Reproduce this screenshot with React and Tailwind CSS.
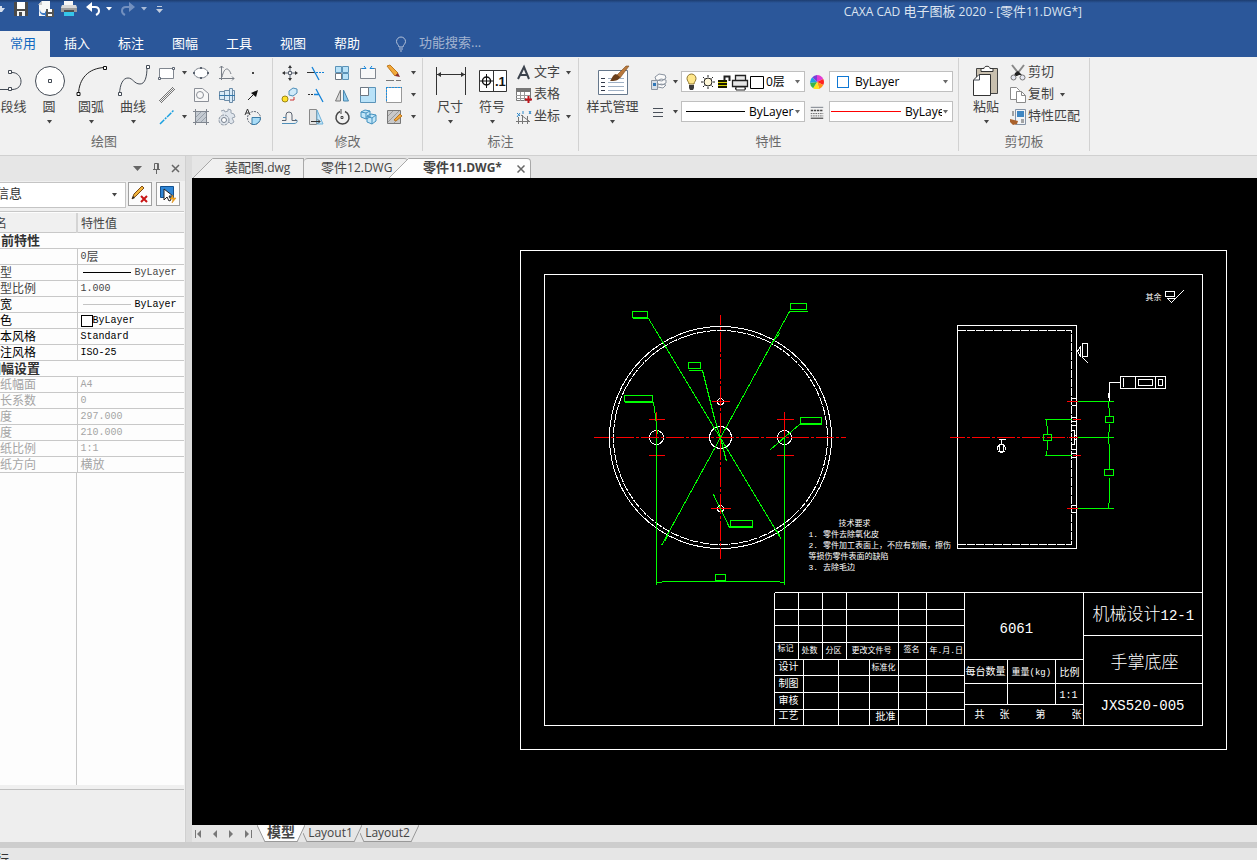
import React, { useState } from "react";

const UI = "font-['Open_Sans','Noto_Sans_CJK_SC',sans-serif]";

/* ---------- small shared parts ---------- */

const Caret = ({ className = "" }) => (
  <svg viewBox="0 0 7 4" className={`h-[4px] w-[7px] shrink-0 ${className}`} fill="#444">
    <path d="M1 0h5L3.500 3.500z" />
  </svg>
);

const Icon = ({ children, size = "h-[18px] w-[18px]" }) => (
  <svg viewBox="0 0 18 18" className={`shrink-0 ${size}`} fill="none" stroke="#5b6370" strokeWidth="1">
    {children}
  </svg>
);

const ToolButton = ({ name, children }) => (
  <button aria-label={name} className="flex h-[22px] w-[26px] items-center justify-center">
    <Icon>{children}</Icon>
  </button>
);

const MenuCaret = ({ name }) => (
  <button aria-label={name} className="flex h-[22px] w-3 items-center justify-center">
    <Caret />
  </button>
);

const BigButton = ({ label, children, width = "w-[42px]" }) => (
  <button className={`flex shrink-0 flex-col items-center pt-[6px] text-[13px] text-[#444] ${width}`}>
    <svg viewBox="0 0 34 34" className="h-[34px] w-[34px]" fill="none" stroke="#444b55">
      {children}
    </svg>
    <span className="whitespace-nowrap leading-4">{label}</span>
    <Caret className="mt-[6px]" />
  </button>
);

const Group = ({ title, children, className = "", inner = "" }) => (
  <section className={`flex shrink-0 flex-col border-r border-[#d2d2d2] ${className}`}>
    <div className={`flex h-[74px] ${inner}`}>{children}</div>
    <h2 className="text-center text-[13px] leading-[18px] text-[#6a6a6a]">{title}</h2>
  </section>
);

/* ---------- title bar and menu ---------- */

const QuickAccess = () => (
  <div className="flex items-center">
    <svg viewBox="0 0 6 16" className="h-4 w-[6px]" fill="#d5deec">
      <path d="M0 5h2v2h3L2 11H0z" />
    </svg>
    <button aria-label="保存" className="ml-[6px]">
      <svg viewBox="0 0 18 18" className="h-[18px] w-[18px]">
        <path d="M2 2h14v14H2z" fill="#4a4a4a" />
        <path d="M5 2h8v7H5z" fill="#fff" />
        <path d="M5 11h8v5H5z" fill="#f4f4f4" />
        <path d="M7 12h3v4H7z" fill="#4a4a4a" />
      </svg>
    </button>
    <button aria-label="另存为" className="ml-[7px]">
      <svg viewBox="0 0 18 18" className="h-[18px] w-[18px]">
        <path d="M5 1h8v15H2V4z" fill="#f7f7f7" />
        <path d="M5 1v4H1z" fill="#c9c9c9" />
        <path d="M3 9c0 4 2 4 5 4v-2l3 3-3 3v-2c-4 0-6-2-5-6z" fill="#3b78c4" />
        <path d="M9 9h8v8H9z" fill="#555" />
        <path d="M11 9h4v3h-4zM11 14h4v2h-4z" fill="#fff" />
      </svg>
    </button>
    <button aria-label="打印" className="ml-[5px]">
      <svg viewBox="0 0 18 18" className="h-[18px] w-[18px]">
        <path d="M4 1h9v5H4z" fill="#f7f7f7" />
        <path d="M2 5h14l1 3v4H1V8z" fill="#9c9c9c" />
        <path d="M2 5h14l1 3H1z" fill="#d8d8d8" />
        <path d="M4 11h10v5H4z" fill="#35c6ea" />
        <path d="M4 10h10v2H4z" fill="#4f4f4f" />
      </svg>
    </button>
    <button aria-label="撤销" className="ml-[6px]">
      <svg viewBox="0 0 18 18" className="h-[18px] w-[18px]" fill="none" stroke="#fff" strokeWidth="2">
        <path d="M4 7h7c3 0 4 2 4 4s-1 3-3 4" />
        <path d="M2 7l6-5v10z" fill="#fff" stroke="none" />
      </svg>
    </button>
    <svg viewBox="0 0 7 4" className="ml-[4px] h-[4px] w-[7px]" fill="#fff"><path d="M0 0h6L3 3.500z" /></svg>
    <button aria-label="重做" className="ml-[6px]">
      <svg viewBox="0 0 18 18" className="h-[18px] w-[18px]" fill="none" stroke="#7390bf" strokeWidth="2">
        <path d="M13 7H7c-3 0-4 2-4 4s1 3 3 4" />
        <path d="M16 7l-6-5v10z" fill="#7390bf" stroke="none" />
      </svg>
    </button>
    <svg viewBox="0 0 7 4" className="ml-[4px] h-[4px] w-[7px]" fill="#a9bbd8"><path d="M0 0h6L3 3.500z" /></svg>
    <button aria-label="自定义快速启动栏" className="ml-[8px]">
      <svg viewBox="0 0 7 7" className="h-[7px] w-[7px]" fill="#c3cddd"><path d="M1 0h5v1H1zM0 3h7L3.500 7z" /></svg>
    </button>
  </div>
);

const menus = ["常用", "插入", "标注", "图幅", "工具", "视图", "帮助"];

const Header = ({ active, onSelect }) => (
  <header className="h-[57px] shrink-0 bg-[#2b579a]">
    <div className="h-[3px] bg-linear-to-b from-[#1d3d70] to-[#2b579a]" />
    <div className="flex h-[28px] items-start justify-between">
      <div className="-mt-[3px]"><QuickAccess /></div>
      <h1 className="pr-[175px] text-[12px] leading-4 text-[#dce4f0]">
        CAXA CAD <span className="text-[13px]">电子图板</span> 2020 - [<span className="text-[13px]">零件</span>11.DWG*]
      </h1>
    </div>
    <nav className="-ml-[4px] flex h-[26px] items-center text-[13px]">
      {menus.map((m) => (
        <button
          key={m}
          onClick={() => onSelect(m)}
          className={`h-[26px] w-[54px] pb-[2px] leading-5 ${m === active ? "bg-[#f1f1f1] text-[#1068c0]" : "text-white"}`}
        >
          {m}
        </button>
      ))}
      <svg viewBox="0 0 12 16" className="ml-[21px] h-4 w-3" fill="none" stroke="#b4c2d9" strokeWidth="1">
        <path d="M4 11c0-2-2.500-3-2.500-5.500a4.500 4.500 0 0 1 9 0C10.500 8 8 9 8 11zM4 13h4M5 15h2" />
      </svg>
      <input
        aria-label="功能搜索"
        placeholder="功能搜索..."
        className="ml-[12px] w-40 bg-transparent pb-[2px] outline-none placeholder:text-[#a3b4d0]"
      />
    </nav>
  </header>
);

/* ---------- ribbon ---------- */

const DrawGroup = () => (
  <Group title="绘图" className="-ml-16 w-[337px]" inner="pl-[50px]">
    <button className="flex w-[42px] shrink-0 flex-col items-center pt-[6px] text-[13px] text-[#444]">
      <svg viewBox="0 0 42 34" className="h-[34px] w-[42px]" fill="none" stroke="#444b55">
        <path d="M8 25.500h14M26 8.500c11 0 13 17 0 17" />
        <path d="M22.500 6.500h3v3h-3zM22.500 23.500h3v3h-3z" fill="#fff" />
      </svg>
      <span className="whitespace-nowrap leading-4">多段线</span>
    </button>
    <BigButton label="圆">
      <circle cx="18" cy="17" r="14.500" fill="#fff" />
      <path d="M16.500 15.500h3v3h-3z" />
    </BigButton>
    <BigButton label="圆弧">
      <path d="M4.500 30C5 15 14 4 31 3.500" stroke="#222" />
      <path d="M3 28.500h3v3H3zM29.500 2.500h3v3h-3z" fill="#fff" stroke="#111" />
    </BigButton>
    <BigButton label="曲线">
      <path d="M3.500 30C4 20 7 14 12 14s6 6 12 6c5 0 7-7 7-17" />
      <path d="M2.500 28.500h3v3h-3zM30.500 1.500h3v3h-3z" fill="#fff" />
    </BigButton>
    <div className="grid grid-cols-[24px_10px_26px_26px_26px] content-start pt-1">
      <ToolButton name="矩形">
        <path d="M1.500 4.500h14v10h-14z" fill="#fff" stroke="#80868f" />
        <path d="M0.500 13.500h2v2h-2zM14.500 3.500h2v2h-2z" fill="#fff" />
      </ToolButton>
      <MenuCaret name="矩形选项" />
      <ToolButton name="椭圆">
        <ellipse cx="9" cy="9" rx="7" ry="5" fill="#fff" stroke="#80868f" />
        <path d="M1 8h2v2H1zM15 8h2v2h-2zM8 3h2v2H8zM8 13h2v2H8z" fill="#5b6370" stroke="none" />
      </ToolButton>
      <ToolButton name="公式曲线"><path d="M3.500 2v14M1 14.500h15M1.500 4l2-2 2 2M14 12.500l2 2-2 2M4 13c2-9 6-11 9-3" stroke="#777d86" /></ToolButton>
      <ToolButton name="点"><path d="M8 8h2v2H8z" fill="#444" stroke="none" /></ToolButton>

      <ToolButton name="平行线"><path d="M1 15L15 1M3 17L17 3M2 16L16 2" stroke="#777" /></ToolButton>
      <span />
      <ToolButton name="多边形">
        <path d="M2.500 2.500h8l6 5v8h-14z" fill="#f8f8f8" stroke="#8b8f97" />
        <circle cx="8" cy="9" r="3.500" stroke="#8b8f97" />
      </ToolButton>
      <ToolButton name="孔轴">
        <path d="M1.500 5.500h5v8h-5zM6.500 4.500h5v10h-5zM11.500 2.500h3v14h-3zM14.500 4.500h2v10h-2z" fill="#d9ebf8" stroke="#6c8ca8" />
        <path d="M1 9.500h16" stroke="#37a" />
      </ToolButton>
      <ToolButton name="箭头"><path d="M4 14l5-5" stroke="#222" /><path d="M14 4l-2 7-5-4z" fill="#111" stroke="none" /></ToolButton>

      <ToolButton name="中心线"><path d="M2 16L16 2" stroke="#1aa0e0" strokeWidth="1.500" strokeDasharray="6 1 2 1" /></ToolButton>
      <MenuCaret name="中心线选项" />
      <ToolButton name="填充">
        <path d="M3.500 3.500h11v11h-11z" fill="#c4cad1" stroke="#59616b" />
        <path d="M1 3.500h16M1 14.500h16M3.500 1v16M14.500 1v16" stroke="#80868f" />
        <path d="M4 14L14 4M4 9l5-5M9 14l5-5" stroke="#98a0aa" />
      </ToolButton>
      <ToolButton name="齿轮">
        <path d="M3 3l3-1 1 2 3-1V1l3 1v3l3 1 1 3-3 1 2 4-3 2-2-2-2 1" fill="#dfe5ec" stroke="#9aa4b1" />
        <circle cx="6" cy="12" r="5" fill="#dfe5ec" stroke="#8993a0" strokeDasharray="3 1" />
        <circle cx="6" cy="12" r="2.500" fill="#fff" stroke="#76808e" />
      </ToolButton>
      <ToolButton name="局部放大图">
        <circle cx="10" cy="10" r="6.500" strokeDasharray="2 1" />
        <path d="M8 9.500h8.500a7 7 0 0 1-8.500 7z" fill="#a9dcf7" stroke="#3d7ea8" />
        <path d="M1 7l2.500-6L6 7M2 5h3" stroke="#333" />
      </ToolButton>
    </div>
  </Group>
);

const ModifyGroup = () => (
  <Group title="修改" className="w-[150px]" inner="pl-1">
    <div className="grid grid-cols-[26px_26px_26px_26px_26px_10px] content-start pt-1">
      <ToolButton name="平移">
        <path d="M9 1l2 3H7zM9 17l2-3H7zM1 9l3-2v4zM17 9l-3-2v4z" fill="#333" stroke="none" />
        <path d="M9 4v3M9 11v3M4 9h3M11 9h3M7.500 7.500h3v3h-3z" />
      </ToolButton>
      <ToolButton name="裁剪"><path d="M0 8.500h8" stroke="#333" /><path d="M9 8.500h8" stroke="#1483d8" strokeDasharray="2 1" /><path d="M5 3l7 13" stroke="#1483d8" strokeWidth="1.300" /></ToolButton>
      <ToolButton name="阵列">
        <path d="M2.500 2.500h6v6h-6zM9.500 2.500h6v6h-6zM9.500 9.500h6v6h-6z" fill="#b9e2f8" stroke="#5b93b8" />
        <path d="M2.500 9.500h6v6h-6z" fill="#fff" stroke="#6e7883" />
      </ToolButton>
      <ToolButton name="打断">
        <path d="M5 4.500H1.500v10h15v-10H13" fill="#f8f8f8" stroke="#80868f" />
        <path d="M3 4.500h4M11 4.500h4M5 2l2 2.500M13 2l-2 2.500" stroke="#1483d8" />
      </ToolButton>
      <ToolButton name="删除">
        <path d="M2 2l3-1 8 8-3 3z" fill="#f2a93b" stroke="#c07a20" />
        <path d="M13 9l2 4-5-1z" fill="#8a3030" stroke="none" />
        <path d="M1 16.500h8M11 16.500h5" stroke="#777" />
      </ToolButton>
      <MenuCaret name="删除选项" />

      <ToolButton name="复制对象">
        <path d="M8 5l4-3 4 1v4l-4 3-4-1z" fill="#cfeaf9" stroke="#4f8fb9" />
        <circle cx="4" cy="13" r="3" fill="#ffe12b" stroke="#9b8616" />
        <path d="M9 14h4v-3" stroke="#c33" />
      </ToolButton>
      <ToolButton name="延伸"><path d="M1 8.500h2M4 8.500h2" stroke="#333" /><path d="M7 8.500h5M9 3l7 13" stroke="#1483d8" strokeWidth="1.300" /></ToolButton>
      <ToolButton name="镜像">
        <path d="M7.500 4v11h-5z" fill="#d8d8d8" stroke="#777" />
        <path d="M10.500 4v11h5z" fill="#8ecbee" stroke="#4a86ac" />
      </ToolButton>
      <ToolButton name="缩放">
        <path d="M1.500 1.500h15v15h-15z" fill="#b9e2f8" stroke="#5b93b8" />
        <path d="M1.500 1.500h8v8h-8z" fill="#fff" stroke="#6e7883" />
      </ToolButton>
      <ToolButton name="拉伸"><path d="M1.500 1.500h15v15h-15z" fill="#fff" stroke="#999" /><path d="M1 1.500h16M1.500 1v15" stroke="#1d8fe0" strokeDasharray="2 1" /></ToolButton>
      <MenuCaret name="拉伸选项" />

      <ToolButton name="等距线">
        <path d="M1 15.500h12c4 0 4-4 1-4" stroke="#4f8fb9" />
        <path d="M1 12.500h4V7a3 3 0 0 1 6 0v5.500h5" />
        <path d="M2 9.500h3" stroke="#4f8fb9" />
      </ToolButton>
      <ToolButton name="过渡">
        <path d="M2.500 1.500h7v15h-7z" fill="#e3e3e3" stroke="#888" />
        <path d="M10 2l6 14h-6z" fill="#c8e8fa" stroke="#6fb2da" />
        <path d="M4 13.500h9M11 11.500l2 2-2 2" stroke="#333" />
      </ToolButton>
      <ToolButton name="旋转"><path d="M7 3.500A6.500 6.500 0 1 0 12 3.500" stroke="#444" strokeWidth="1.500" /><path d="M8 1v5M8 8.500h2v2H8z" stroke="#444" /></ToolButton>
      <ToolButton name="分解">
        <path d="M2 4l4-2 5 1v6l-4 2-5-2zM8 8l4-2 5 1v6l-4 3-5-2z" fill="#c3e6f8" stroke="#4391bf" />
        <path d="M2 4l5 1 4-2M7 5v6M8 8l5 2 4-3M13 10v6" stroke="#4391bf" />
      </ToolButton>
      <ToolButton name="填充编辑">
        <path d="M2.500 2.500h13v13h-13z" fill="#c9c9c9" stroke="#777" />
        <path d="M3 8l5-5M3 14L14 3M9 15l6-6" stroke="#9a9a9a" />
        <path d="M9 12l6-6 2 2-6 5z" fill="#f2a93b" stroke="#b87520" />
      </ToolButton>
      <MenuCaret name="填充编辑选项" />
    </div>
  </Group>
);

const RowButton = ({ label, caret, children }) => (
  <button className="flex h-[22px] items-center text-[13px] text-[#444]">
    <Icon>{children}</Icon>
    <span className="ml-[1px] whitespace-nowrap pb-[3px] leading-[19px]">{label}</span>
    {caret && <Caret className="ml-[5px]" />}
  </button>
);

const AnnotateGroup = () => (
  <Group title="标注" className="w-[156px]" inner="pl-[6px]">
    <BigButton label="尺寸">
      <path d="M3.500 3v28M32.500 3v28M4 10.500h28" stroke="#333" />
      <path d="M4 10.500l4-2.500v5zM32 10.500l-4-2.500v5z" fill="#333" stroke="none" />
    </BigButton>
    <BigButton label="符号">
      <path d="M4.500 6.500h27v21h-27zM18.500 6.500v21" fill="#fff" stroke="#333" />
      <circle cx="11.500" cy="17" r="4" stroke="#111" strokeWidth="1.500" />
      <path d="M5 17h13M11.500 10v14" stroke="#111" />
      <text x="20" y="22" fontSize="13" fontWeight="700" fill="#111" stroke="none" className="font-['Liberation_Sans',sans-serif]">.1</text>
    </BigButton>
    <div className="flex flex-col pl-[2px] pt-1">
      <RowButton label="文字" caret>
        <path d="M3 15L9 3l5 12M5 11h7" stroke="#3c434d" strokeWidth="2" />
      </RowButton>
      <RowButton label="表格">
        <path d="M1.500 2.500h14v12h-14z" fill="#fff" stroke="#777" />
        <path d="M1 2h15v4H1z" fill="#777" stroke="none" />
        <path d="M1 9.500h14M1 12.500h10M5.500 6v9M9.500 6v9" stroke="#999" />
        <path d="M13.500 10v7M10 13.500h7" stroke="#c0141c" strokeWidth="2" />
      </RowButton>
      <RowButton label="坐标" caret>
        <path d="M3.500 9v7M1 13.500h14M6 7l8 6M7.500 7v9M12.500 8v8" stroke="#777" />
        <path d="M2 5l3 3M5 5L2 9M8 3v3M14 3l2 3M16 3l-2 3" stroke="#2d87c9" />
      </RowButton>
    </div>
  </Group>
);

const Combo = ({ label, value, children, textClass = "" }) => (
  <div className="flex h-[21px] w-[124px] items-center border border-[#bfbfbf] bg-white">
    {children}
    <select aria-label={label} className={`min-w-0 flex-1 appearance-none bg-transparent text-[12px] text-black outline-none ${textClass}`}>
      <option>{value}</option>
    </select>
    <Caret className="mr-[3px] opacity-80" />
  </div>
);

const PropertyGroup = () => (
  <Group title="特性" className="w-[380px]">
    <BigButton label="样式管理" width="w-[67px]">
      <path d="M2.500 6.500h29v24h-29z" fill="#fff" stroke="#66788c" />
      <path d="M5 14.500h4M5 18.500h4M5 22.500h4M5 26.500h4" stroke="#333a4a" strokeWidth="1.200" />
      <path d="M12 14.500h6M12 18.500h16M12 22.500h16M12 26.500h16M22 14.500h6" stroke="#9fb0c4" strokeWidth="1.200" />
      <path d="M21 11l9-9h3L24 14z" fill="#b9793c" stroke="#7a4a1c" strokeWidth=".6" />
      <path d="M20 10l4 3c-1 4-6 4-10 4 2-2 2-6 6-7z" fill="#6b3f1b" stroke="none" />
    </BigButton>
    <div className="ml-[2px] flex flex-col gap-[9px] pt-[13px]">
      <div className="flex h-[21px] items-center">
        <button aria-label="图层" className="flex w-[20px] justify-center">
          <Icon>
            <path d="M6 4l4-3 6 1 1 3-4 3-6-1zM8 8l4-2 5 1v3l-4 2-4-1zM9 12l3-1 5 1-3 3-5-1" fill="#fafafa" stroke="#8b94a0" />
            <path d="M2.500 7.500h6v9h-6z" fill="#d5dee8" stroke="#8b94a0" />
            <path d="M4 10h3v3H4z" fill="#2f77b8" stroke="none" />
          </Icon>
        </button>
        <Caret className="ml-[4px] mr-[2px]" />
        <Combo label="当前图层" value="0层" textClass="pl-[2px]">
          <svg viewBox="0 0 82 20" className="h-5 w-[82px] shrink-0" fill="none" stroke="#222">
            <path d="M7 12c0-2-2-3-2-5.500a4.500 4.500 0 0 1 9 0C14 9 12 10 12 12z" fill="#ffe78a" stroke="#8d7430" />
            <path d="M7 13h5v3l-1 2H8l-1-2z" fill="#3b3b3b" stroke="none" />
            <circle cx="26" cy="10" r="4" fill="#fff8d8" />
            <path d="M26 3v2M26 15v2M19 10h2M31 10h2M21 5l1.500 1.500M29.500 13.500L31 15M31 5l-1.500 1.500M21 15l1.500-1.500" />
            <path d="M36 8h9v8h-9z" fill="#1b1b00" stroke="none" />
            <path d="M36 10.500h9M36 13.500h9" stroke="#d8d400" />
            <path d="M42.500 8V4.500h5V9" strokeWidth="2" />
            <path d="M53.500 8V3.500h10V8M53 16.500h11M50.500 8.500h15v6h-15z" fill="#e8e8e8" strokeWidth="1.300" />
            <path d="M54 15h9v3h-9z" fill="#fff" />
            <path d="M68.500 4.500h13v12h-13z" fill="#fff" stroke="#000" strokeWidth="1" />
          </svg>
        </Combo>
        <button aria-label="颜色" className="flex w-[24px] justify-center">
          <Icon size="h-[14px] w-[14px]">
            <g stroke="none">
              <path d="M9 9V0a9 9 0 0 1 8 5z" fill="#e23bd2" />
              <path d="M9 9l8-4a9 9 0 0 1 0 8z" fill="#f22" />
              <path d="M9 9l8 4a9 9 0 0 1-5 5z" fill="#ff9417" />
              <path d="M9 9l3 9a9 9 0 0 1-8-1z" fill="#ffe21b" />
              <path d="M9 9l-5 8a9 9 0 0 1-4-7z" fill="#38b54a" />
              <path d="M9 9l-9 1a9 9 0 0 1 3-7z" fill="#1f9de8" />
              <path d="M9 9L3 3a9 9 0 0 1 6-3z" fill="#7a3fd8" />
            </g>
          </Icon>
        </button>
        <Combo label="当前颜色" value="ByLayer" textClass="pl-[6px]">
          <span className="ml-[7px] h-[12px] w-[12px] shrink-0 border border-[#0f78d4] bg-white" />
        </Combo>
      </div>
      <div className="flex h-[21px] items-center">
        <button aria-label="线型" className="flex w-[20px] justify-center">
          <Icon><path d="M4 5.500h10M4 9.500h10M4 13.500h10" stroke="#4a505a" strokeWidth="1.200" /></Icon>
        </button>
        <Caret className="ml-[4px] mr-[2px]" />
        <Combo label="当前线型" value="ByLayer" textClass="pl-[4px]">
          <span className="ml-[4px] h-px w-[59px] shrink-0 bg-black" />
        </Combo>
        <button aria-label="线宽" className="flex w-[24px] justify-center">
          <Icon size="h-[14px] w-[14px]">
            <path d="M1 3h16" strokeWidth="1" />
            <path d="M1 7h16" stroke="#444" strokeWidth="2" strokeDasharray="3 1" />
            <path d="M1 11h16M1 14h16" stroke="#444" strokeDasharray="2 1" />
            <path d="M1 17h16" stroke="#444" strokeWidth="1.500" />
          </Icon>
        </button>
        <Combo label="当前线宽" value="ByLayer" textClass="pl-[4px]">
          <span className="ml-[1px] h-px w-[70px] shrink-0 bg-[#ff0000]" />
        </Combo>
      </div>
    </div>
  </Group>
);

const ClipboardGroup = () => (
  <Group title="剪切板" className="w-[131px]" inner="pl-[6px]">
    <BigButton label="粘贴">
      <path d="M7.500 4.500h21v25h-21z" fill="#c8bfae" stroke="#444" />
      <path d="M12 4.500h3c0-3 6-3 6 0h3v3H12z" fill="#fff" stroke="#333" />
      <path d="M10 10.500h11.500v21h-17V16z" fill="#fff" stroke="#333" />
      <path d="M10.500 10.500V16H5" />
    </BigButton>
    <div className="flex flex-col pl-[2px] pt-1">
      <RowButton label="剪切">
        <path d="M3 1l7 9M15 1L8 10" stroke="#888" strokeWidth="2" />
        <path d="M6 9l3-2 4 4-3 0-2 1-3 0z" fill="#222" stroke="none" />
        <circle cx="4.500" cy="13.500" r="2.500" fill="#e4e6f0" stroke="#777" />
        <circle cx="13.500" cy="13.500" r="2.500" fill="#e4e6f0" stroke="#777" />
      </RowButton>
      <RowButton label="复制" caret>
        <path d="M1.500 1.500h6l3 3v9h-9z" fill="#fff" stroke="#8a8a8a" />
        <path d="M7.500 5.500h5l4 4v7h-9z" fill="#fff" stroke="#8a8a8a" />
        <path d="M12.500 5.500v4h4" stroke="#8a8a8a" />
      </RowButton>
      <RowButton label="特性匹配">
        <path d="M6.500 1.500h10v15h-10z" fill="#f2f4f7" stroke="#8593a5" />
        <path d="M8 3h7v6H8z" fill="#3f86c2" stroke="none" />
        <path d="M12 12h3M12 14h3M4 3v5" stroke="#555" />
        <path d="M1 11l4 1 4 1-1 3-4 1-3-3z" fill="#a9612b" stroke="none" />
      </RowButton>
    </div>
  </Group>
);

/* ---------- property panel ---------- */

const Mono = ({ children }) => (
  <span className="font-['Liberation_Mono',monospace] text-[10px]">{children}</span>
);

const LineSample = ({ color }) => <i className={`ml-[2px] mr-[4px] h-px w-[48px] ${color}`} />;

const currentProps = [
  ["层", <><Mono>0</Mono><span className="pb-[2px]">层</span></>, "text-[#444]"],
  ["线型", <><LineSample color="bg-black" /><Mono>ByLayer</Mono></>, "text-[#444]"],
  ["线型比例", <Mono>1.000</Mono>, "text-[#444]"],
  ["线宽", <><LineSample color="bg-[#c4c4c4]" /><Mono>ByLayer</Mono></>, "text-black"],
  ["颜色", <><i className="h-[12px] w-[12px] border border-black bg-white" /><Mono>ByLayer</Mono></>, "text-black"],
  ["文本风格", <Mono>Standard</Mono>, "text-black"],
  ["标注风格", <Mono>ISO-25</Mono>, "text-black"],
];

const sheetProps = [
  ["图纸幅面", <Mono>A4</Mono>],
  ["加长系数", <Mono>0</Mono>],
  ["宽度", <Mono>297.000</Mono>],
  ["高度", <Mono>210.000</Mono>],
  ["图纸比例", <Mono>1:1</Mono>],
  ["图纸方向", <span className="pb-[2px]">横放</span>],
];

const PropRow = ({ name, value, color }) => (
  <tr className={`border-b border-[#c8c8c8] ${color}`}>
    <td className="border-r border-[#c8c8c8] p-0 pl-5">
      <div className="h-[15px] leading-[13px]">{name}</div>
    </td>
    <td className="p-0 pl-[3px]">
      <div className="flex h-[15px] items-center leading-[15px]">{value}</div>
    </td>
  </tr>
);

const SectionRow = ({ title }) => (
  <tr className="border-b border-[#c8c8c8]">
    <th colSpan={2} className="p-0 pl-5 text-left text-[13px] font-bold text-[#333]">
      <div className="h-[15px] leading-[14px]">{title}</div>
    </th>
  </tr>
);

const PropertyPanel = () => (
  <aside className="-ml-8 flex w-[218px] shrink-0 flex-col border-r border-[#d0d0d0] bg-[#f0f0f0]">
    <div className="flex h-[25px] items-center justify-end gap-[10px] bg-[#e6e6e6] pr-[5px]">
      <button aria-label="窗口位置">
        <svg viewBox="0 0 9 5" className="h-[5px] w-[9px]" fill="#666"><path d="M0 0h9L4.500 5z" /></svg>
      </button>
      <button aria-label="自动隐藏">
        <svg viewBox="0 0 9 11" className="h-[11px] w-[9px]" fill="none" stroke="#666"><path d="M2.500 0.500h4v6h-4zM5.500 0v6M1 6.500h7M4.500 7v4" /></svg>
      </button>
      <button aria-label="关闭面板">
        <svg viewBox="0 0 9 9" className="h-[9px] w-[9px]" stroke="#666" strokeWidth="1.500"><path d="M1 1l7 7M8 1L1 8" /></svg>
      </button>
    </div>
    <div className="flex h-[30px] items-start gap-[2px] pt-px">
      <div className="flex h-[26px] w-[158px] items-center border border-[#c4c4c4] bg-white">
        <select aria-label="选择对象" className="min-w-0 flex-1 appearance-none bg-transparent pb-[2px] pl-[1px] text-[13px] text-[#333] outline-none">
          <option>全局信息</option>
        </select>
        <Caret className="mr-[7px]" />
      </div>
      <button aria-label="清除选择" className="flex h-6 w-6 items-center justify-center border border-[#a0a0a0] bg-[#fcfcfc]">
        <Icon>
          <path d="M1 14l2-5 8-8 2 2-8 8z" fill="#f2b53c" stroke="#7c4b16" />
          <path d="M1 14l1-3 2 2z" fill="#222" stroke="none" />
          <path d="M10 11l6 6M16 11l-6 6" stroke="#c81414" strokeWidth="2" />
        </Icon>
      </button>
      <button aria-label="快速选择" className="ml-[2px] flex h-6 w-6 items-center justify-center border border-[#a0a0a0] bg-[#fcfcfc]">
        <Icon>
          <path d="M1.500 1.500h13v11h-13z" fill="#2f86d6" stroke="#12508f" />
          <path d="M5 4v11l3-3 2 4 2-1-2-4h4z" fill="#fff" stroke="#222" />
          <path d="M14 10l-3 4h3l-1 4 4-5h-3z" fill="#f7a51c" stroke="#d4860c" strokeWidth=".5" />
        </Icon>
      </button>
    </div>
    <div className="mr-px flex flex-1 flex-col border-t border-[#c8c8c8] bg-[#fdfdfd] pt-px">
      <table className="w-full table-fixed border-collapse font-['Noto_Sans_CJK_SC',sans-serif] text-[12px]">
        <colgroup>
          <col className="w-[109px]" />
          <col />
        </colgroup>
        <thead>
          <tr className="border-b border-[#c8c8c8] bg-[#f0f0f0] text-[#444]">
            <th className="border-r-2 border-[#d4d4d4] p-0 pl-[3px] text-left font-normal">
              <div className="h-[19px] leading-[19px]">特性名</div>
            </th>
            <th className="p-0 pl-[3px] text-left font-normal">
              <div className="h-[19px] leading-[19px]">特性值</div>
            </th>
          </tr>
        </thead>
        <tbody>
          <SectionRow title="当前特性" />
          {currentProps.map(([name, value, color]) => (
            <PropRow key={name} name={name} value={value} color={color} />
          ))}
          <SectionRow title="图幅设置" />
          {sheetProps.map(([name, value]) => (
            <PropRow key={name} name={name} value={value} color="text-[#a5a5a5]" />
          ))}
        </tbody>
      </table>
      <div className="w-[109px] flex-1 border-r border-[#c8c8c8]" />
    </div>
    <div className="mr-px mt-[4px] h-[53px] border-t border-[#c0c0c0] bg-[#eeeeee]" />
  </aside>
);

/* ---------- drawing ---------- */

const white = [
  "M520 250H1226V749H520zM544 274H1202V725H544z",
  // title block
  "M774 592H1202M774 592V725",
  "M774 609H964M774 625H964M774 642H964M774 659H1083M774 675H964M774 692H964M774 709H964",
  "M798 592V659M822 592V659M846 592V659M898 592V725M926 592V725M964 592V725",
  "M803 659V725M838 659V725M869 659V725",
  "M1083 592V725M1083 635H1202M964 683H1202M964 704H1083M1007 659V704M1055 659V704",
  // side view
  "M957 325H1076V548H957z",
  "M1071 398H1076M1071 405H1076M1071 417H1076M1071 421H1076M1071 425H1076",
  "M1071 430H1074V444H1071M1074 435H1076M1074 439H1076",
  "M1071 449H1076M1071 453H1076M1071 457H1076M1071 505H1076M1071 512H1076",
  // surface and datum symbols
  "M1082 343H1087V356H1082zM1077 351L1080 346V356zM1082 357L1088 363",
  "M1109 400V382H1120M1107 393H1109M1108 393V397",
  "M1120 376H1165V388H1120zM1123 377V386M1135 376V388M1155 376V388M1138 379H1152V385H1138zM1158 379H1162V385H1158z",
  "M998 439H1005M1001 439V444M999 444H1003V451H999z",
  "M1165 291H1174V296H1165zM1167 298H1175L1171 302zM1171 302L1183 290",
].join("");

const green = [
  "M632 311H647V317H632zM632 318H648L781 539",
  "M790 303H806V309H790zM807 311H789L661 545",
  "M777 333L772 342M779 333L772 342M667 535L664 541M776 530L780 536",
  "M688 362H700V368H688zM688 370H702L714 418L720 437L726 461",
  "M624 395H652V401H624zM624 402H653L655 416L657 434",
  "M800 417H821V423H800zM821 424H799L770 449",
  "M730 520H752V526H730zM752 527H729L713 494",
  "M656 437V584M784 437V584M656 582H661M661 581H779M779 582H784",
  "M715 574H725V580H715z",
  // side view dimensions
  "M1077 401H1113M1077 437H1113M1077 508H1113M1044 419H1071M1044 455H1071",
  "M1046 419V425M1047 425V434M1047 440V449M1046 450V455M1043 434H1051V440H1043z",
  "M1108 401V407M1109 407V416M1105 416H1113V422H1105zM1109 423V431M1108 431V443M1109 443V469",
  "M1104 469H1113V475H1104zM1109 477V502M1108 502V508",
].join("");

const red = [
  "M648 419H664M648 455H664M656 411V437M776 419H793M776 455H793M784 411V437",
  "M711 401H729M710 508H730",
  "M1066 401H1077M1072 419H1080M1068 437H1077M1072 455H1080M1066 508H1077",
].join("");

// [text, x, y]
const tiny = [
  ["其余", 1145, 299],
  ["技术要求", 838, 525],
  ["1. 零件去除氧化皮", 808, 536],
  ["2. 零件加工表面上，不应有划痕，擦伤", 808, 547],
  ["等损伤零件表面的缺陷", 808, 558],
  ["3. 去除毛边", 808, 569],
  ["标记", 777, 650],
  ["处数", 801, 652],
  ["分区", 825, 652],
  ["更改文件号", 851, 652],
  ["签名", 903, 651],
  ["年.月.日", 929, 652],
  ["标准化", 871, 669],
];

const small = [
  ["设计", 778, 669],
  ["制图", 778, 686],
  ["审核", 778, 703],
  ["工艺", 778, 718],
  ["批准", 875, 719],
  ["每台数量", 965, 674],
  ["比例", 1059, 675],
  ["共", 974, 717],
  ["张", 999, 717],
  ["第", 1035, 717],
  ["张", 1071, 717],
];

const Drawing = () => (
  <svg
    role="img"
    aria-label="零件11"
    viewBox="191.500 177.500 1065 647"
    preserveAspectRatio="xMaxYMid meet"
    className="block h-full w-full"
    fill="none"
    strokeWidth="1"
    shapeRendering="crispEdges"
  >
    <g stroke="#fff">
      <path d={white} />
      <circle cx="720" cy="437" r="111" />
      <circle cx="720" cy="437" r="107" strokeDasharray="9 1" />
      <circle cx="720" cy="437" r="11" />
      <circle cx="656" cy="437" r="7" />
      <circle cx="784" cy="437" r="7" />
      <circle cx="720" cy="401" r="3" />
      <circle cx="720" cy="508" r="3" />
      <circle cx="1001" cy="448" r="4" />
      <path d="M957 330H1071V544M957 544H1071" strokeDasharray="8 1" />
    </g>
    <g stroke="#ff0000">
      <path d={red} />
      <path d="M720 314V558" strokeDasharray="20 2 3 2" strokeDashoffset="10" />
      <path d="M593 437H845M949 437H1067" strokeDasharray="18 2 3 2" strokeDashoffset="3" />
    </g>
    <path d={green} stroke="#00ff00" />
    <g fill="#fff" className="font-['Liberation_Mono','Noto_Sans_CJK_SC',monospace]">
      <g fontSize="8">
        {tiny.map(([t, x, y]) => <text key={t} x={x} y={y}>{t}</text>)}
      </g>
      <g fontSize="10">
        {small.map(([t, x, y]) => <text key={t + x} x={x} y={y}>{t}</text>)}
        <text x="1011" y="674" fontSize="9">重量(kg)</text>
        <text x="1059" y="697">1:1</text>
      </g>
      <g fontSize="14" className="font-light">
        <text x="999" y="632">6061</text>
        <text x="1100" y="709">JXS520-005</text>
        <text x="1092" y="619"><tspan fontSize="17">机械设计</tspan>12-1</text>
        <text x="1110" y="667" fontSize="17">手掌底座</text>
      </g>
    </g>
  </svg>
);

/* ---------- tabs round the drawing ---------- */

const FileTabs = () => (
  <div className="flex h-[22px] items-end bg-[#e6e6e6] pl-px text-[12px] text-[#444]">
    <button className="flex h-5">
      <svg viewBox="0 0 20 20" className="h-5 w-5"><path d="M0 20L19.500.5H20V20z" fill="#f0f0f0" /><path d="M0 20L19.500.5H20" fill="none" stroke="#a8a8a8" /></svg>
      <span className="h-5 w-[91px] border-r border-t border-[#a8a8a8] bg-[#f0f0f0] pl-[12px] text-left leading-4"><span className="text-[13px]">装配图</span>.dwg</span>
    </button>
    <button className="h-5 w-[104px] rounded-t-sm border-t border-[#a8a8a8] bg-[#f0f0f0] pb-[2px] pl-[17px] text-left leading-4"><span className="text-[13px]">零件</span>12.DWG</button>
    <div className="-ml-[19px] flex h-5">
      <svg viewBox="0 0 20 20" className="h-5 w-5"><path d="M0 20L19.500.5H20V20z" fill="#fdfdfd" /><path d="M0 20L19.500.5H20" fill="none" stroke="#a8a8a8" /></svg>
      <div className="flex h-5 w-[122px] items-center rounded-tr-sm border-r border-t border-[#a8a8a8] bg-[#fdfdfd]">
        <button className="w-[108px] whitespace-nowrap pb-[2px] pl-[14px] text-left font-bold leading-4"><span className="text-[13px]">零件</span>11.DWG*</button>
        <button aria-label="关闭">
          <svg viewBox="0 0 8 8" className="h-2 w-2" stroke="#666" strokeWidth="1.500"><path d="M.5.5l7 7M7.500.5l-7 7" /></svg>
        </button>
      </div>
    </div>
  </div>
);

const navIcons = [
  ["首页", "M2 1h1v8H2zM8 1v8L4 5z"],
  ["上一页", "M7 1v8L3 5z"],
  ["下一页", "M3 1v8l4-4z"],
  ["末页", "M2 1v8l4-4zM8 1h1v8H8z"],
];

const LayoutTabs = () => (
  <div className="flex h-[17px] items-start bg-[#e6e6e6] text-[12px] text-[#444]">
    <div className="flex h-[17px] w-[65px] items-center justify-between pl-px pr-[4px]">
      {navIcons.map(([name, d]) => (
        <button key={name} aria-label={name}>
          <svg viewBox="0 0 10 10" className="h-[10px] w-[10px]" fill="#777"><path d={d} /></svg>
        </button>
      ))}
    </div>
    <button className="flex h-[17px] font-bold">
      <svg viewBox="0 0 8 17" className="h-[17px] w-2"><path d="M0 0H8V17z" fill="#fdfdfd" /><path d="M0 0L8 17" stroke="#999" /></svg>
      <span className="h-[17px] w-8 border-b border-[#999] bg-[#fdfdfd] text-[14px] leading-[14px]">模型</span>
      <svg viewBox="0 0 8 17" className="h-[17px] w-2"><path d="M0 0H8L0 17z" fill="#fdfdfd" /><path d="M8 0L0 17" stroke="#999" /></svg>
    </button>
    {["Layout1", "Layout2"].map((name) => (
      <button key={name} className="-ml-[2px] flex h-[17px]">
        <svg viewBox="0 0 4 17" className="h-[17px] w-1"><path d="M0 8l4 9" stroke="#999" /></svg>
        <span className="h-[17px] w-[47px] border-b border-[#999] text-center leading-[15px]">{name}</span>
        <svg viewBox="0 0 8 17" className="h-[17px] w-2"><path d="M8 0L0 17" stroke="#999" /></svg>
      </button>
    ))}
  </div>
);

const App = () => {
  const [menu, setMenu] = useState("常用");

  return (
    <div className={`flex h-screen flex-col overflow-hidden bg-[#e6e6e6] ${UI}`}>
      <Header active={menu} onSelect={setMenu} />

      {/* Ribbon */}
      <div className="flex h-[99px] shrink-0 overflow-hidden border-b border-[#d0d0d0] bg-[#f1f1f1] pb-1 pt-px">
        <DrawGroup />
        <ModifyGroup />
        <AnnotateGroup />
        <PropertyGroup />
        <ClipboardGroup />
      </div>

      {/* Workspace */}
      <div className="flex min-h-0 flex-1">
        <PropertyPanel />
        <div className="w-[6px] shrink-0 bg-[#dcdcdc]" />
        <main className="flex min-w-0 flex-1 flex-col">
          <FileTabs />
          <div className="min-h-0 flex-1 bg-black">
            <Drawing />
          </div>
          <LayoutTabs />
        </main>
      </div>

      {/* Command line */}
      <footer className="h-[18px] shrink-0 overflow-hidden border-t-[6px] border-[#cdcdcd] bg-[#e6e6e6]">
        <div className="flex w-[9px] justify-end pt-[2px]">
          <span className="shrink-0 whitespace-nowrap text-[13px] leading-[18px] text-[#333]">命令行</span>
        </div>
      </footer>
    </div>
  );
};

export default App;
